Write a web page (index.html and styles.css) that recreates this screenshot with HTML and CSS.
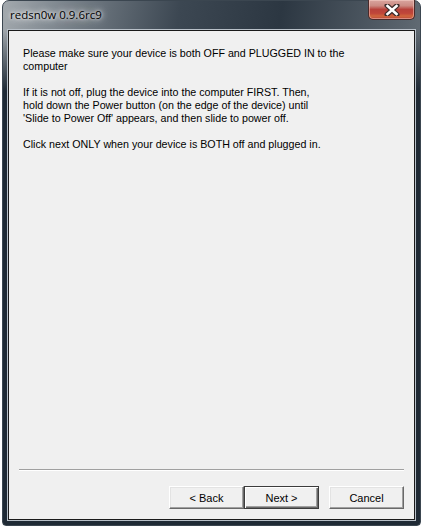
FILE: index.html
```html
<!DOCTYPE html>
<html lang="en">
<head>
  <meta charset="UTF-8">
  <title>redsn0w 0.9.6rc9</title>
  <link rel="stylesheet" href="styles.css">
</head>
<body>
  <div class="window">
    <div class="titlebar">
      <span class="title">redsn0w 0.9.6rc9</span>
      <div class="close">
        <svg width="16" height="12" viewBox="0 0 16 12">
          <path d="M3 1.5 L13 10.5 M13 1.5 L3 10.5" stroke="#3a2a2a" stroke-width="5" stroke-linecap="round"/>
          <path d="M3.5 2 L12.5 10 M12.5 2 L3.5 10" stroke="#ffffff" stroke-width="2.6" stroke-linecap="square"/>
        </svg>
      </div>
    </div>

    <div class="client">
      <div class="content">
        <p>Please make sure your device is both OFF and PLUGGED IN to the<br>computer</p>
        <p>If it is not off, plug the device into the computer FIRST. Then,<br>hold down the Power button (on the edge of the device) until<br>'Slide to Power Off' appears, and then slide to power off.</p>
        <p>Click next ONLY when your device is BOTH off and plugged in.</p>
      </div>

      <div class="separator"></div>

      <div class="buttons">
        <button class="btn">&lt; Back</button>
        <button class="btn default">Next &gt;</button>
        <button class="btn cancel">Cancel</button>
      </div>
    </div>
  </div>
</body>
</html>
```

FILE: styles.css
```css
* {
  box-sizing: border-box;
  margin: 0;
  padding: 0;
}

body {
  background: #ffffff;
  font-family: "Liberation Sans", Arial, sans-serif;
  font-size: 11px;
  color: #000;
}

.window {
  margin-left: 2px;
  width: 419px;
  height: 526px;
  border-radius: 7px 7px 4px 4px;
  background:
    linear-gradient(to bottom, rgba(31, 42, 53, 0) 0px, rgba(31, 42, 53, 0) 30px, #1f2a35 90px),
    linear-gradient(100deg, #a3a9ae 0%, #7c858d 12%, #3c4752 35%, #2c3742 55%, #5a646d 80%, #8a9197 100%);
  border: 1px solid #3b4650;
  padding: 0 5px 5px 5px;
  display: flex;
  flex-direction: column;
}

.titlebar {
  height: 29px;
  display: flex;
  justify-content: space-between;
  align-items: flex-start;
}

.title {
  font-family: "Open Sans", "Noto Sans", sans-serif;
  font-size: 11.5px;
  padding: 6px 0 0 2px;
  text-shadow: 0 0 6px rgba(255, 255, 255, 0.9), 0 0 10px rgba(255, 255, 255, 0.7), 0 0 3px rgba(255, 255, 255, 0.8);
}

.close {
  width: 47px;
  height: 20px;
  margin-top: -1px;
  border: 1px solid #4a2a2a;
  border-top: none;
  border-radius: 0 0 5px 5px;
  background: linear-gradient(to bottom, #d9a59f 0%, #cc8b83 30%, #b8413a 50%, #c0463a 70%, #d0653c 85%, #b7453b 100%);
  box-shadow: inset 0 0 0 1px rgba(255, 220, 210, 0.45);
  display: flex;
  align-items: center;
  justify-content: center;
}

.client {
  flex: 1;
  background: #f0f0f0;
  border: 1px solid #1a1a1a;
  box-shadow: 0 0 0 1px #b8c0c8;
  display: flex;
  flex-direction: column;
}

.content {
  flex: 1;
  padding: 16px 14px 0 14px;
  font-size: 10.7px;
}

.content p {
  line-height: 13px;
  margin-bottom: 13px;
}

.separator {
  margin: 0 10px;
  border-top: 1px solid #a0a0a0;
  border-bottom: 1px solid #ffffff;
}

.buttons {
  display: flex;
  justify-content: flex-end;
  padding: 15px 10px 10px 10px;
}

.btn {
  width: 75px;
  height: 23px;
  font-family: "Liberation Sans", Arial, sans-serif;
  font-size: 11px;
  color: #000;
  background: #f0f0f0;
  border: 1px solid;
  border-color: #ffffff #696969 #696969 #ffffff;
  box-shadow: inset -1px -1px 0 #a0a0a0, inset 1px 1px 0 #e3e3e3;
}

.btn.default {
  border: 1px solid #3c3c3c;
  box-shadow: inset 1px 1px 0 #ffffff, inset -1px -1px 0 #696969, inset -2px -2px 0 #a0a0a0;
}

.btn.cancel {
  margin-left: 10px;
}
```
